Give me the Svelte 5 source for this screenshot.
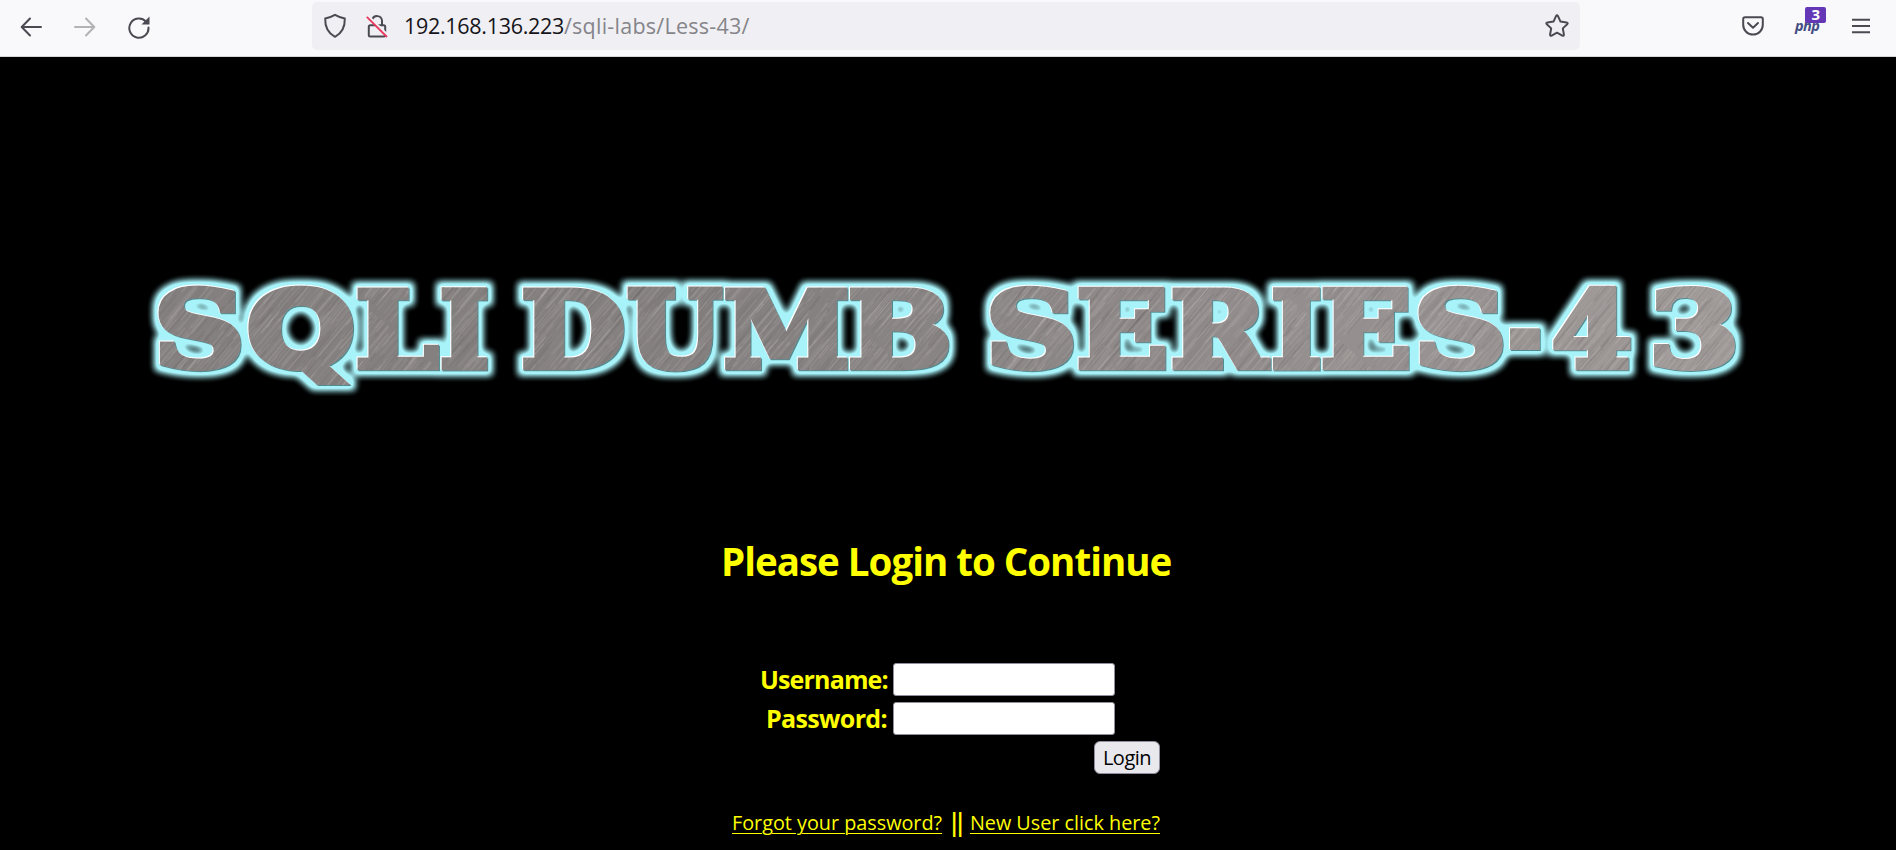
<script lang="ts">
  // Horizontal ink extents of every glyph in the banner title.
  const letters: [string, number, number][] = [
    ['S', 157.7, 241], ['Q', 248.3, 352.7], ['L', 356.7, 439.3], ['I', 440.7, 488],
    ['D', 522.3, 624], ['U', 627, 723.3], ['M', 724.7, 848], ['B', 849.2, 948.5],
    ['S', 989.5, 1073.5], ['E', 1077.7, 1165.5], ['R', 1171.7, 1270.8], ['I', 1272, 1320.5],
    ['E', 1321.8, 1409], ['S', 1417.5, 1503], ['-', 1509, 1540.5], ['4', 1553, 1630.5],
    ['3', 1654, 1735.5]
  ];
  const size = 105;
  const stroke = 7;
  const ctx = document.createElement('canvas').getContext('2d')!;
  const glyphs = letters.map(([ch, a, b]) => {
    // The Q takes the sans cut for its straight diagonal tail.
    const sans = ch === 'Q';
    ctx.font = `bold ${size}px "${sans ? 'DejaVu Sans' : 'DejaVu Serif'}"`;
    const m = ctx.measureText(ch);
    const k = (b - a - stroke) / (m.actualBoundingBoxRight + m.actualBoundingBoxLeft);
    const t = Math.max(0, Math.min(1, (a - 700) / 1000));
    const tone = `rgb(${Math.round(132 + 28 * t)} ${Math.round(128 + 26 * t)} ${Math.round(127 + 26 * t)})`;
    return { ch, sans, tone, x: a + stroke / 2 + m.actualBoundingBoxLeft * k, k };
  });

  // Brushed metal scratches.
  let seed = 11;
  const rnd = () => (seed = (seed * 16807) % 2147483647) / 2147483647;
  const scratches = Array.from({ length: 900 }, () => {
    const light = rnd() > 0.42;
    return {
      x: rnd() * 300, y: rnd() * 200, w: 15 + rnd() * 50,
      c: light ? '#cbc5c3' : '#5e5a5a', o: 0.1 + rnd() * 0.2
    };
  });
</script>

<div class="page">
  <header>
    <nav>
      <svg width="22" height="22" viewBox="0 0 22 22"><path d="M10 2.5 1.7 11l8.3 8.5M2 11h19" class="ln" /></svg>
      <svg width="22" height="22" viewBox="0 0 22 22" class="dim"><path d="m12 2.5 8.300 8.500-8.300 8.500M20 11H1" class="ln" /></svg>
      <svg class="reload" width="24" height="24" viewBox="0 0 24 24"><path d="M19 6.600A9.600 9.600 0 1 0 21.500 12.500" class="ln" /><path d="M22.500 1.500v8h-8z" fill="#4b4a52" /></svg>
    </nav>
    <div class="urlbar">
      <svg width="24" height="26" viewBox="0 0 24 26"><path d="M12 1.800c3 1.700 6.200 2.900 9.800 3.700.3 8.700-3 14.700-9.800 18.300C5.200 20.200 1.900 14.200 2.200 5.500 5.800 4.700 9 3.500 12 1.800z" class="ln" /></svg>
      <svg class="lock" width="22" height="26" viewBox="0 0 22 26"><rect x="2.800" y="12.200" width="16.400" height="11.300" rx="1.500" class="ln" /><path d="M6.300 6.500a5 5 0 0 1 9.700 1v4.700" class="ln" /><path d="m2 3 19.500 19" stroke="#f0f0f4" stroke-width="2.500" /><path d="M.8 3.800 21 24" stroke="#e8385f" stroke-width="1.800" /></svg>
      <span class="url">192.168.136.223<i>/sqli-labs/Less-43/</i></span>
      <svg class="star" width="26" height="26" viewBox="0 0 26 26"><path d="M12 3.200q1-1.900 2 0l2.500 5.400 6 .8q2 .4.700 1.800l-4.400 4.200 1.100 6q.2 2-1.600 1.200L13 19.700l-5.300 2.900q-1.800.8-1.600-1.200l1.100-6-4.400-4.200q-1.300-1.400.7-1.800l6-.8z" class="ln" /></svg>
    </div>
    <div class="tools">
      <svg width="22" height="20" viewBox="0 0 22 20"><path d="M3 1.200h16q1.800 0 1.800 1.800v5.800a9.800 9.800 0 0 1-19.600 0V3q0-1.800 1.800-1.800z" class="ln" /><path d="m6 7 5 4.800L16 7" class="ln" /></svg>
      <div class="php">php<b>3</b></div>
      <svg width="18" height="16" viewBox="0 0 18 16"><path d="M0 1.700h18M0 8h18M0 14.300h18" class="ln" /></svg>
    </div>
  </header>

  <main>
    <svg class="banner" width="1896" height="170" viewBox="0 250 1896 170">
      <defs>
        <pattern id="brush" width="300" height="200" patternUnits="userSpaceOnUse" patternTransform="rotate(-50)">
          {#each scratches as s}
            <rect x={s.x} y={s.y} width={s.w} height=".9" fill={s.c} opacity={s.o} />
          {/each}
        </pattern>
        <filter id="glow" filterUnits="userSpaceOnUse" x="120" y="250" width="1660" height="170">
          <feMorphology in="SourceAlpha" operator="dilate" radius="5" result="fat" />
          <feGaussianBlur in="fat" stdDeviation="3.800" result="soft" />
          <feComponentTransfer in="soft" result="strong"><feFuncA type="linear" slope="1.500" intercept="-0.030" /></feComponentTransfer>
          <feFlood flood-color="#a8f3f9" />
          <feComposite in2="strong" operator="in" result="halo" />
          <feOffset in="SourceAlpha" dx="-1" dy="-1" result="up" />
          <feFlood flood-color="#fff" />
          <feComposite in2="up" operator="in" result="edge" />
          <feOffset in="SourceAlpha" dx=".6" dy=".6" result="down" />
          <feFlood flood-color="#4f8b91" />
          <feComposite in2="down" operator="in" result="shade" />
          <feMerge>
            <feMergeNode in="halo" /><feMergeNode in="shade" /><feMergeNode in="edge" /><feMergeNode in="SourceGraphic" />
          </feMerge>
        </filter>
        <mask id="word" maskUnits="userSpaceOnUse" x="120" y="250" width="1660" height="170">
          {#each glyphs as g}
            <text class="glyph" class:sans={g.sans} fill="#fff" stroke="#fff" transform="translate({g.x} 366.800) scale({g.k} 1)">{g.ch}</text>
          {/each}
        </mask>
      </defs>
      <g filter="url(#glow)">
        {#each glyphs as g}
          <text class="glyph" class:sans={g.sans} fill={g.tone} stroke={g.tone} transform="translate({g.x} 366.800) scale({g.k} 1)">{g.ch}</text>
        {/each}
      </g>
      <rect x="140" y="270" width="1620" height="130" fill="url(#brush)" mask="url(#word)" />
    </svg>

    <h1>Please Login to Continue</h1>

    <form onsubmit={(e) => e.preventDefault()}>
      <label class="wide" for="user">Username:</label><input id="user" type="text" />
      <label for="pass">Password:</label><input id="pass" type="password" />
      <button>Login</button>
    </form>

    <div class="links">
      <a class="forgot" href="#forgot">Forgot your password?</a><span>||</span><a class="new" href="#new">New User click here?</a>
    </div>
  </main>
</div>

<style>
  :global(body) { margin: 0; background: #000; }
  .page { width: 1896px; height: 850px; overflow: hidden; background: #000; font-family: "Open Sans", "Noto Sans", sans-serif; display: flex; flex-direction: column; }
  header { height: 57px; flex: none; box-sizing: border-box; background: #f9f9fb; border-bottom: 1px solid #d5d5d8; display: flex; align-items: flex-start; }
  svg { display: block; flex: none; }
  .ln { fill: none; stroke: #4b4a52; stroke-width: 2; stroke-linecap: round; stroke-linejoin: round; }
  .dim { opacity: .4; }
  nav { width: 312px; height: 54px; box-sizing: border-box; padding-left: 20px; display: flex; align-items: center; gap: 32px; }
  .reload { margin-left: -1px; }
  .urlbar { width: 1268px; height: 48px; margin-top: 2px; box-sizing: border-box; padding: 0 10px 0 11px; border-radius: 5px; background: #f0f0f4; display: flex; align-items: center; }
  .lock { margin-left: 19px; }
  .url { margin-left: 16px; flex: 1; font-size: 21.500px; line-height: 48px; letter-spacing: -.3px; color: #15141a; white-space: nowrap; }
  .url i { font-style: normal; letter-spacing: .25px; color: #85848a; }
  .tools { flex: 1; height: 52px; padding-left: 162px; display: flex; align-items: center; }
  .php { position: relative; width: 30px; margin: 0 27px 0 31px; font-size: 14.500px; line-height: 20px; font-style: italic; font-weight: 700; letter-spacing: -.6px; color: #434d85; }
  .php b { position: absolute; left: 10px; top: -9px; width: 21px; height: 16px; border-radius: 2px; background: #6437b7; color: #fff; font: bold 15px/15px "Open Sans", sans-serif; text-align: center; }
  main { flex: 1; display: flex; flex-direction: column; align-items: center; padding-top: 193px; }
  .glyph { font: bold 105px "DejaVu Serif", serif; stroke-width: 7px; stroke-linejoin: miter; vector-effect: non-scaling-stroke; }
  .sans { font-family: "DejaVu Sans", sans-serif; }
  h1 { margin: 113px 2px 0 0; width: 452px; font-size: 38.500px; line-height: 56px; letter-spacing: -1px; font-weight: 700; color: #ff0; white-space: nowrap; }
  form { margin: 74px 0 0 24px; width: 400px; display: grid; grid-template-columns: 127px 1fr; column-gap: 6px; row-gap: 6px; }
  label { height: 33px; line-height: 33px; text-align: right; font-size: 25px; letter-spacing: -.65px; font-weight: 700; color: #ff0; white-space: nowrap; }
  .wide { letter-spacing: -.85px; }
  input { width: 222px; height: 33px; box-sizing: border-box; border: 1px solid #8f8f9d; border-radius: 3px; background: #fff; padding: 0 6px; font: 20px "Open Sans", sans-serif; }
  button { grid-column: 2; justify-self: end; width: 66px; height: 33px; padding: 1px 0 0; border: 1px solid #8f8f9d; border-radius: 6px; background: #e9e9ed; color: #000; font: 20px/30px "Open Sans", sans-serif; letter-spacing: -.5px; }
  .links { margin: 32px 4px 0 0; width: 428px; display: flex; align-items: center; justify-content: space-between; height: 34px; white-space: nowrap; color: #ff0; }
  .links a { color: #ff0; font-size: 19.800px; line-height: 34px; text-underline-offset: 3px; text-decoration-thickness: 1px; text-decoration-skip-ink: auto; }
  .links span { padding: 0 6px 3px 0; font-size: 26px; line-height: 31px; font-weight: 600; letter-spacing: -8.200px; }
</style>
